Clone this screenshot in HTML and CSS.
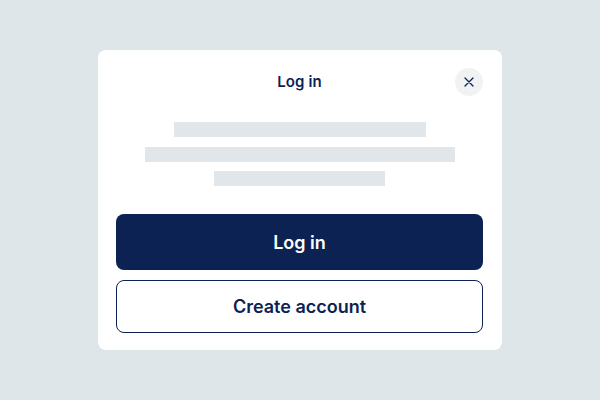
FILE: index.html
```html
<!DOCTYPE html>
<html>
<head>
<meta charset="utf-8">
<link rel="stylesheet" href="styles.css">
</head>
<body>
<div class="card">
  <div class="header">
    <span class="spacer"></span>
    <h1 class="title">Log in</h1>
    <button class="close" aria-label="Close">
      <svg width="10" height="10" viewBox="0 0 10 10"><path d="M1 1 L9 9 M9 1 L1 9" stroke="#0b2253" stroke-width="1.3" stroke-linecap="round"/></svg>
    </button>
  </div>
  <div class="skeleton">
    <div class="line l1"></div>
    <div class="line l2"></div>
    <div class="line l3"></div>
  </div>
  <div class="actions">
    <button class="btn primary">Log in</button>
    <button class="btn secondary">Create account</button>
  </div>
</div>
</body>
</html>
```
FILE: styles.css
```css
* { box-sizing: border-box; }
html, body { margin: 0; padding: 0; }
body {
  width: 600px;
  height: 400px;
  background: #dfe6e9;
  display: flex;
  align-items: center;
  justify-content: center;
  font-family: "Inter", "Noto Sans", sans-serif;
  color: #0b2253;
}
.card {
  width: 404px;
  height: 300px;
  background: #ffffff;
  border-radius: 8px;
  padding: 18px 19px 17px 18px;
  display: flex;
  flex-direction: column;
}
.header {
  display: grid;
  grid-template-columns: 28px 1fr 28px;
  align-items: center;
  height: 28px;
}
.title {
  margin: 0;
  text-align: center;
  font-size: 15px;
  font-weight: 600;
  line-height: 28px;
  letter-spacing: 0.1px;
}
.close {
  width: 28px;
  height: 28px;
  border-radius: 50%;
  border: none;
  background: #f0f2f4;
  padding: 0;
  display: flex;
  align-items: center;
  justify-content: center;
}
.skeleton {
  margin-top: 26px;
  display: flex;
  flex-direction: column;
  align-items: center;
  gap: 9.5px;
}
.line {
  height: 15px;
  background: #e0e6e9;
}
.l1 { width: 252px; }
.l2 { width: 310px; }
.l3 { width: 171px; }
.actions {
  margin-top: 28px;
  display: flex;
  flex-direction: column;
  gap: 10px;
}
.btn {
  font-family: inherit;
  font-size: 18px;
  font-weight: 600;
  border-radius: 8px;
  width: 100%;
}
.primary {
  height: 56px;
  background: #0b2253;
  color: #ffffff;
  border: none;
}
.secondary {
  height: 53px;
  background: #ffffff;
  color: #0b2253;
  border: 1px solid #0b2253;
}
```
